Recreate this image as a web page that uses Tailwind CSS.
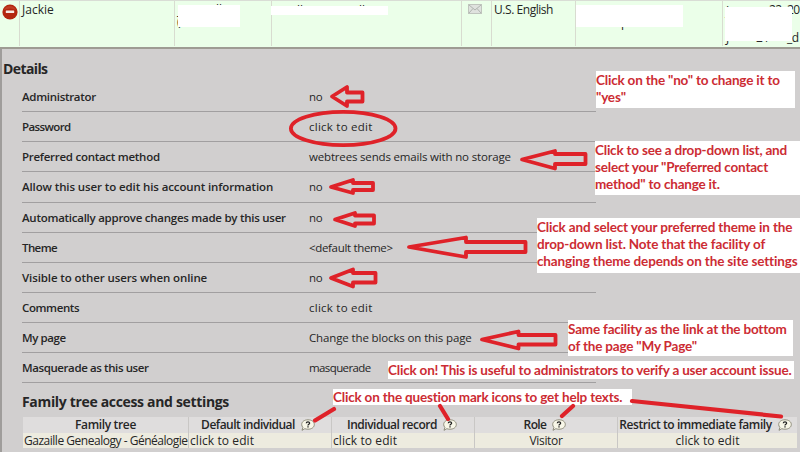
<!DOCTYPE html>
<html lang="en">
<head>
<meta charset="utf-8">
<title>User administration</title>
<script src="https://cdn.jsdelivr.net/npm/@tailwindcss/browser@4"></script>
</head>
<body class="relative w-[800px] h-[452px] overflow-hidden bg-[#d1cfcf] font-['Open_Sans','Noto_Sans',sans-serif] text-[#262626]">
<svg class="hidden">
  <symbol id="help" viewBox="0 0 14 12"><path d="M7 .8C10.700 .8 13.300 2.800 13.300 5.500S10.700 10.200 7 10.200C5.800 10.200 4.700 10 3.800 9.700L1 11.300 1.900 8.400C1.100 7.600.7 6.600.7 5.500.7 2.800 3.300.8 7 .8Z" fill="#f8f7e8" stroke="#85826f" stroke-width=".9"/><path d="M5.300 4.200C5.400 2.400 8.700 2.500 8.600 4.200 8.500 5.200 7 5.200 7 6.400M7 7.300V8.600" fill="none" stroke="#222" stroke-width="1.300"/></symbol>
</svg>

<header class="flex h-[49px] border-t border-[#d9ddd5] bg-[#ebffe9] border-b-2 border-b-[#9e9c93] text-[12px] leading-[17px]">
  <div class="w-[20px] h-[45px] border-r border-[#d8dcd0] pl-[2px] pt-[3px]">
    <svg class="size-[16px]" viewBox="0 0 16 16"><circle cx="8" cy="8" r="7.600" fill="#b3260f"/><path d="M2 6A6.500 6.500 0 0 1 14 6Q8 3 2 6Z" fill="#c03c25"/><rect x="3.800" y="6.500" width="8.400" height="2.600" rx=".5" fill="#f7e9e4"/></svg>
  </div>
  <div class="w-[155px] h-[45px] border-r border-[#d8dcd0] pl-[2px]">Jackie</div>
  <div class="relative w-[97px] h-[45px] border-r border-[#d8dcd0]">
    <span class="absolute left-[3px] top-0">J</span><span class="absolute left-[38px] top-0">ill</span><span class="absolute left-[2px] top-[12px]">(</span>
    <div class="absolute left-[3px] top-[4px] w-[62px] h-[22px] bg-white"></div>
  </div>
  <div class="relative w-[190px] h-[45px] border-r border-[#d8dcd0]">
    <span class="absolute left-[22px] top-[1px]">illi</span><span class="absolute left-[59px] top-[1px]">G</span><span class="absolute left-[84px] top-[1px]">ill</span>
    <div class="absolute left-[20px] top-[13px] w-[80px] h-[6px] bg-[#ebffe9]"></div><div class="absolute left-[-1px] top-[5px] w-[117px] h-[9px] bg-white"></div>
  </div>
  <div class="w-[30px] h-[45px] border-r border-[#d8dcd0] pl-[6px] pt-[3px]">
    <svg class="w-[14px] h-[10px]" viewBox="0 0 14 10"><rect x=".5" y=".5" width="13" height="9" fill="#dfe2de" stroke="#c0c5be"/><path d="M1 1 7 6 13 1M1 9 5 4.500M13 9 9 4.500" fill="none" stroke="#b0b5b0"/></svg>
  </div>
  <div class="w-[84px] h-[45px] border-r border-[#d8dcd0] pl-[2px] tracking-[-0.45px]">U.S. English</div>
  <div class="relative w-[147px] h-[45px] border-r border-[#d8dcd0]">
    <span class="absolute left-[45px] top-[13px]">p</span>
    <div class="absolute left-0 top-[4px] w-[107px] h-[22px] bg-white"></div>
  </div>
  <div class="relative w-[77px] h-[45px] overflow-hidden">
    <span class="absolute left-[3px] top-[1px]">J</span><span class="absolute left-[46px] top-0 whitespace-nowrap tracking-[-0.5px]">22, 20</span>
    <span class="absolute left-[3px] top-[28px]">J</span><span class="absolute left-[33px] top-[28px]">21</span><span class="absolute left-[64px] top-[28px] tracking-[-0.5px]">_d</span>
    <div class="absolute left-[2px] top-[6px] w-[67px] h-[34px] bg-white"></div>
  </div>
</header>

<main class="h-[403px] border-l-2 border-[#9f9d9b]">
  <h1 class="h-[33px] pt-[11px] pl-px text-[14px] leading-[18px] font-bold tracking-[-0.6px]">Details</h1>
  <dl class="ml-[20px] w-[574px] text-[11.500px] leading-[29px] whitespace-nowrap">
    <div class="flex h-[30px] border-b border-[#a19fa0]"><dt class="w-[287px] font-semibold tracking-[-0.3px]">Administrator</dt><dd class="tracking-[-0.2px]">no</dd></div>
    <div class="flex h-[30px] border-b border-[#a19fa0]"><dt class="w-[287px] font-semibold tracking-[-0.6px]">Password</dt><dd class="tracking-[0.25px]">click to edit</dd></div>
    <div class="flex h-[30px] border-b border-[#a19fa0]"><dt class="w-[287px] font-semibold tracking-[-0.27px]">Preferred contact method</dt><dd class="tracking-[-0.17px]">webtrees sends emails with no storage</dd></div>
    <div class="flex h-[31px] border-b border-[#a19fa0]"><dt class="w-[287px] font-semibold tracking-[-0.11px]">Allow this user to edit his account information</dt><dd class="tracking-[-0.2px]">no</dd></div>
    <div class="flex h-[30px] border-b border-[#a19fa0]"><dt class="w-[287px] font-semibold tracking-[-0.26px]">Automatically approve changes made by this user</dt><dd class="tracking-[-0.2px]">no</dd></div>
    <div class="flex h-[30px] border-b border-[#a19fa0]"><dt class="w-[287px] font-semibold tracking-[-0.6px]">Theme</dt><dd class="tracking-[-0.33px]">&lt;default theme&gt;</dd></div>
    <div class="flex h-[30px] border-b border-[#a19fa0]"><dt class="w-[287px] font-semibold tracking-[-0.1px]">Visible to other users when online</dt><dd class="tracking-[-0.2px]">no</dd></div>
    <div class="flex h-[30px] border-b border-[#a19fa0]"><dt class="w-[287px] font-semibold tracking-[-0.4px]">Comments</dt><dd class="tracking-[0.25px]">click to edit</dd></div>
    <div class="flex h-[30px] border-b border-[#a19fa0]"><dt class="w-[287px] font-semibold tracking-[-0.4px]">My page</dt><dd class="tracking-[-0.13px]">Change the blocks on this page</dd></div>
    <div class="flex h-[30px] border-b border-[#a19fa0]"><dt class="w-[287px] font-semibold tracking-[-0.4px]">Masquerade as this user</dt><dd class="tracking-[-0.6px]">masquerade</dd></div>
  </dl>
  <h2 class="ml-[20px] mt-[9px] h-[25px] text-[14px] leading-[20px] font-bold tracking-[-0.33px]">Family tree access and settings</h2>
  <div class="ml-[21px] w-[774px] grid grid-cols-[166px_143px_143px_143px_179px] text-[12px] leading-[16px] whitespace-nowrap">
    <div class="h-[16px] bg-[#dfdddd] border-r border-[#c9c7c5] flex justify-center font-semibold tracking-[-0.35px]">Family tree</div>
    <div class="h-[16px] bg-[#dfdddd] border-r border-[#c9c7c5] pr-1 flex justify-center items-center gap-[6px] font-semibold tracking-[-0.5px]">Default individual <svg class="w-[14px] h-[12px] shrink-0"><use href="#help"/></svg></div>
    <div class="h-[16px] bg-[#dfdddd] border-r border-[#c9c7c5] pr-[2px] flex justify-center items-center gap-[6px] font-semibold tracking-[-0.5px]">Individual record <svg class="w-[14px] h-[12px] shrink-0"><use href="#help"/></svg></div>
    <div class="h-[16px] bg-[#dfdddd] border-r border-[#c9c7c5] pr-[2px] flex justify-center items-center gap-[6px] font-semibold tracking-[-0.6px]">Role <svg class="w-[14px] h-[12px] shrink-0"><use href="#help"/></svg></div>
    <div class="h-[16px] bg-[#dfdddd] pr-1 flex justify-center items-center gap-[6px] font-semibold tracking-[-0.42px]">Restrict to immediate family <svg class="w-[14px] h-[12px] shrink-0"><use href="#help"/></svg></div>
    <div class="h-[15px] bg-[#edebdf] border-r border-[#c9c7c5] pl-px tracking-[-0.48px]">Gazaille Genealogy - Généalogie</div>
    <div class="h-[15px] bg-[#edebdf] border-r border-[#c9c7c5] pl-px tracking-[0.08px]">click to edit</div>
    <div class="h-[15px] bg-[#edebdf] border-r border-[#c9c7c5] pl-px tracking-[0.08px]">click to edit</div>
    <div class="h-[15px] bg-[#edebdf] border-r border-[#c9c7c5] text-center tracking-[-0.3px]">Visitor</div>
    <div class="h-[15px] bg-[#edebdf] text-center tracking-[0.08px]">click to edit</div>
  </div>
</main>

<aside class="font-['Lato',sans-serif] font-bold text-[13.500px] leading-[17px] text-[#cc2c33] whitespace-nowrap tracking-[-0.19px]">
  <p class="absolute left-[596px] top-[71px] w-[199px] h-[37px] bg-white pt-px">Click on the "no" to change it to<br>"yes"</p>
  <p class="absolute left-[595px] top-[141px] w-[205px] h-[54px] bg-white pt-px tracking-[-0.2px]">Click to see a drop-down list, and<br>select your "Preferred contact<br>method" to change it.</p>
  <p class="absolute left-[537px] top-[218px] w-[263px] h-[55px] bg-white pt-px tracking-[-0.15px]">Click and select your preferred theme in the<br>drop-down list. Note that the facility of<br>changing theme depends on the site settings</p>
  <p class="absolute left-[568px] top-[320px] w-[225px] h-[36px] bg-white pt-px">Same facility as the link at the bottom<br>of the page "My Page"</p>
  <p class="absolute left-[388px] top-[361px] w-[406px] h-[18px] bg-white pt-px">Click on! This is useful to administrators to verify a user account issue.</p>
  <p class="absolute left-[333px] top-[389px] w-[299px] h-[16px] bg-white">Click on the question mark icons to get help texts.</p>
</aside>

<svg class="absolute inset-0 w-[800px] h-[452px] pointer-events-none" viewBox="0 0 800 452" fill="none" stroke="#df2229" stroke-width="3.800" stroke-linejoin="round" stroke-linecap="round">
  <path d="M332 96.500 347 87V92.500H362.500V101.500H347V106Z"/>
  <ellipse cx="343.200" cy="128.500" rx="52.300" ry="16.700"/>
  <path d="M522 159.500 555 151V154H585.500V164H555V168.500Z"/>
  <path d="M331 187 353 180V183H373V190H353V193Z"/>
  <path d="M335 219.500 355 213V215.500H374V223.500H355V226Z"/>
  <path d="M409 247 466 237.500V242H525.500V252H466V257Z"/>
  <path d="M331 278 353 269.500V273H375.500V282.500H353V286.500Z"/>
  <path d="M482 339.500 518.500 331.500V335H555.500V344.500H518.500V348.500Z"/>
  <path d="M334 409 315 420.500M440 406 448 419M573 406 562 416M632 401 781 416.500" stroke-width="4.200"/>
</svg>
</body>
</html>
